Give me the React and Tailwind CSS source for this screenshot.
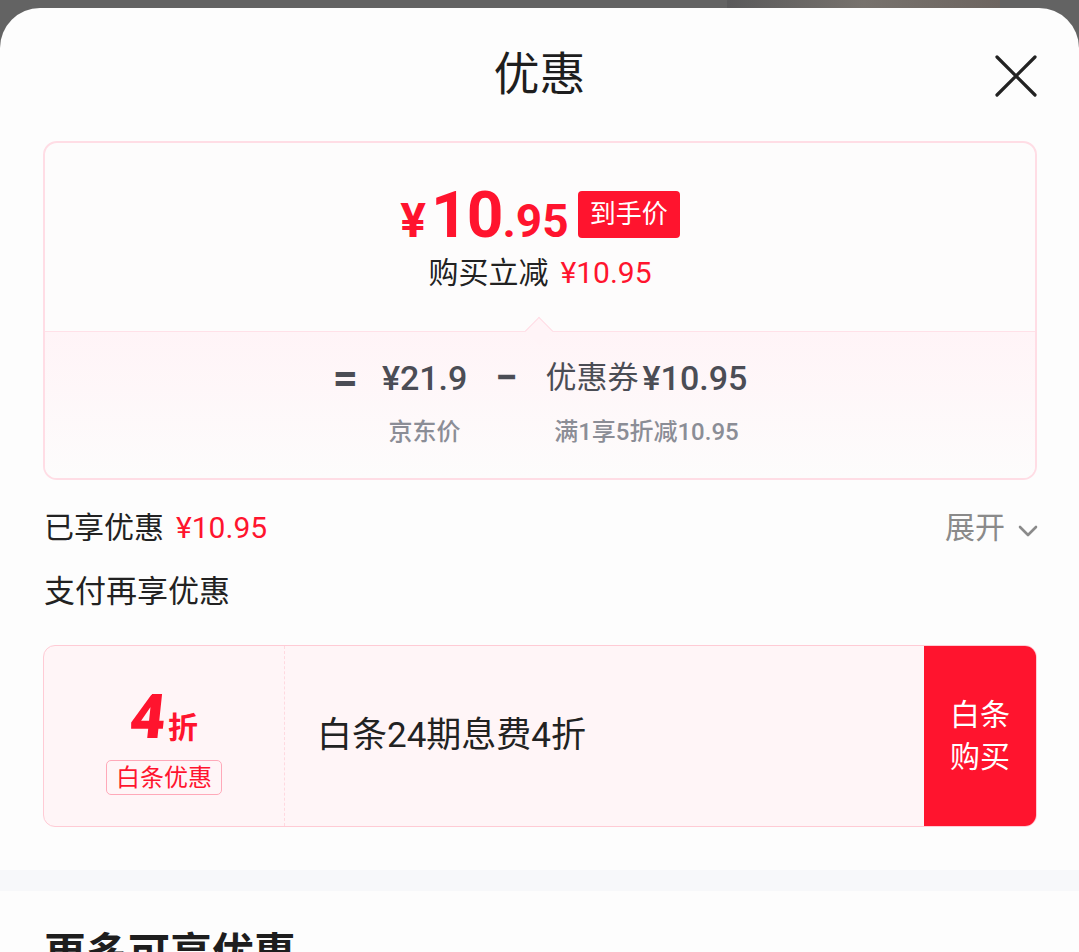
const font = { fontFamily: '"Roboto", "Noto Sans CJK SC", sans-serif' };

const PriceCard = () => (
  <div className="ml-[43px] mr-[42px] mt-[41px] rounded-[14px] border-2 border-[#ffdde5] overflow-hidden bg-[#fdfcfc]">
    {/* final price */}
    <div className="h-[188px] pt-[41px] flex flex-col items-center">
      <div className="flex items-end">
        <div className="flex items-baseline text-[#ff142e] font-bold leading-none">
          <span className="text-[48px] mr-[5px]">¥</span>
          <span className="text-[64px] tracking-[-1px]">10</span>
          <span className="text-[46px]">.95</span>
        </div>
        <span className="ml-[9px] mb-[10px] h-[47px] px-[12px] flex items-center rounded-[4px] bg-[#ff142e] text-white text-[26px]">
          到手价
        </span>
      </div>
      <div className="mt-[7px] h-[36px] flex items-center text-[30px] leading-none">
        <span className="text-[#222]">购买立减</span>
        <span className="ml-[12px] text-[#ff142e]">¥10.95</span>
      </div>
    </div>

    {/* breakdown */}
    <div className="relative h-[147px] border-t border-[#ffe1e8] bg-gradient-to-b from-[#fff4f7] to-[#fdfcfc] pt-[26px]">
      <div className="absolute left-1/2 -top-[11px] -ml-[11px] w-[20px] h-[20px] rotate-45 border-t border-l border-[#ffdbe4] bg-[#fff4f7]" />
      <div className="flex justify-center items-start text-[#4b4d55]">
        <span className="h-[40px] flex items-center text-[44px] font-bold mr-[24px]">=</span>
        <div className="flex flex-col items-center">
          <span className="h-[40px] flex items-center text-[34px] font-medium">¥21.9</span>
          <span className="mt-[19px] h-[30px] flex items-center text-[24px] font-medium text-[#8b8d96]">京东价</span>
        </div>
        <span className="h-[40px] flex items-center text-[40px] font-bold mx-[28px]">−</span>
        <div className="flex flex-col items-center">
          <span className="h-[40px] flex items-center">
            <span className="text-[31px]">优惠券</span>
            <span className="ml-[4px] text-[34px] font-medium">¥10.95</span>
          </span>
          <span className="mt-[19px] h-[30px] flex items-center text-[24px] font-medium text-[#8b8d96]">满1享5折减10.95</span>
        </div>
      </div>
    </div>
  </div>
);

const BaitiaoCard = () => (
  <div className="ml-[43px] mr-[42px] mt-[34px] h-[182px] flex rounded-[12px] border border-[#ffcbd5] bg-[#fff5f7] overflow-hidden">
    <div className="w-[241px] shrink-0 border-r border-dashed border-[#ffd9e0] flex flex-col items-center pt-[40px]">
      <div className="flex items-baseline text-[#ff142e] leading-none">
        <span className="text-[62px] font-black -skew-x-6">4</span>
        <span className="ml-[2px] text-[30px] font-bold">折</span>
      </div>
      <span className="mt-[12px] h-[35px] px-[9px] flex items-center rounded-[5px] border border-[#ffa9b9] text-[24px] text-[#ff142e] leading-none">
        白条优惠
      </span>
    </div>
    <div className="flex-1 flex items-center pl-[32px] text-[35px] text-[#222]">白条24期息费4折</div>
    <div className="w-[112px] shrink-0 bg-[#ff142e] flex flex-col items-center justify-center text-white text-[30px] leading-[42px]">
      <span>白条</span>
      <span>购买</span>
    </div>
  </div>
);

export default function App() {
  return (
    <div className="w-[1079px] h-[952px] overflow-hidden bg-[#636363]" style={font}>
      {/* background peeking behind the sheet */}
      <div className="h-[8px] flex">
        <div className="w-[727px]" />
        <div className="w-[273px] bg-gradient-to-r from-[#5a5a5b] via-[#77726d] to-[#6d6560]" />
      </div>

      <div className="rounded-t-[40px] bg-[#fdfdfd] h-[944px]">
        <div className="relative pt-[40px] h-[92px] flex justify-center">
          <h1 className="h-[52px] flex items-center text-[46px] text-[#1e1e1e] leading-none">优惠</h1>
          <svg className="absolute right-[42px] top-[47px] w-[42px] h-[42px]" viewBox="0 0 42 42" fill="none" stroke="#222" strokeWidth="3.2" strokeLinecap="round">
            <path d="M2 2 L40 40 M40 2 L2 40" />
          </svg>
        </div>

        <PriceCard />

        <div className="mx-[44px] mt-[28px] h-[40px] flex items-center justify-between text-[30px] leading-none">
          <div className="flex items-center">
            <span className="text-[#222]">已享优惠</span>
            <span className="ml-[12px] text-[#ff142e]">¥10.95</span>
          </div>
          <div className="flex items-center text-[#8a8a8a] -mr-[3px]">
            <span>展开</span>
            <svg className="ml-[13px] mt-[6px] w-[20px] h-[12px]" viewBox="0 0 20 12" fill="none" stroke="#8a8a8a" strokeWidth="2.6" strokeLinecap="round" strokeLinejoin="round">
              <path d="M2 2 L10 10 L18 2" />
            </svg>
          </div>
        </div>

        <div className="mx-[44px] mt-[23px] h-[40px] flex items-center text-[31px] text-[#222] leading-none">支付再享优惠</div>

        <BaitiaoCard />

        <div className="mt-[43px] h-[21px] bg-[#f7f8fa]" />

        <div className="px-[44px] pt-[42px] text-[42px] font-bold text-[#1e1e1e] leading-none">更多可享优惠</div>
      </div>
    </div>
  );
}
